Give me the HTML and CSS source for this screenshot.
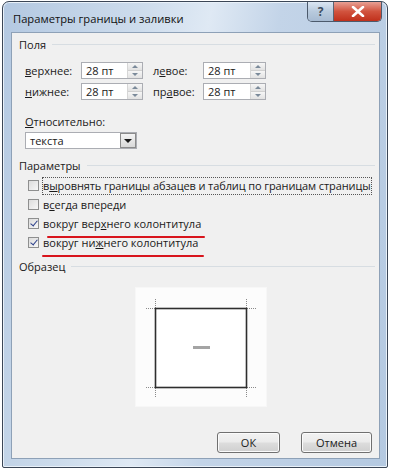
FILE: index.html
```html
<!DOCTYPE html>
<html lang="ru">
<head>
    <meta charset="UTF-8">
    <title>Параметры границы и заливки</title>
    <link rel="stylesheet" href="styles.css">
</head>
<body>
<div class="window">
    <div class="titlebar">
        <span class="title">Параметры границы и заливки</span>
        <div class="caption-buttons">
            <div class="cap help">?</div>
            <div class="cap close">
                <svg width="14" height="11" viewBox="0 0 14 11"><path d="M2 1 L12 10 M12 1 L2 10" stroke="#fff" stroke-width="2.6" stroke-linecap="round"/></svg>
            </div>
        </div>
    </div>

    <div class="client">
        <div class="group-head"><span>Поля</span><i></i></div>

        <div class="fields">
            <label class="lbl"><u>в</u>ерхнее:</label>
            <div class="spin"><span>28 пт</span><b class="arrows"><em class="up"></em><em class="down"></em></b></div>
            <label class="lbl"><span>л<u>е</u>вое:</span></label>
            <div class="spin"><span>28 пт</span><b class="arrows"><em class="up"></em><em class="down"></em></b></div>

            <label class="lbl"><u>н</u>ижнее:</label>
            <div class="spin"><span>28 пт</span><b class="arrows"><em class="up"></em><em class="down"></em></b></div>
            <label class="lbl">пр<u>а</u>вое:</label>
            <div class="spin"><span>28 пт</span><b class="arrows"><em class="up"></em><em class="down"></em></b></div>
        </div>

        <div class="relative-lbl"><u>О</u>тносительно:</div>
        <div class="combo"><span>текста</span><b class="drop"><em></em></b></div>

        <div class="group-head params"><span>Параметры</span><i></i></div>

        <div class="checks">
            <div class="check-row"><span class="box"></span><span class="text focus">в<u>ы</u>ровнять границы абзацев и таблиц по границам страницы</span></div>
            <div class="check-row"><span class="box"></span><span class="text">в<u>с</u>егда впереди</span></div>
            <div class="check-row"><span class="box on"></span><span class="text marked top">вокруг вер<u>х</u>него колонтитула</span></div>
            <div class="check-row"><span class="box on"></span><span class="text marked bottom">вокруг ни<u>ж</u>него колонтитула</span></div>
        </div>

        <div class="group-head sample-head"><span>Образец</span><i></i></div>

        <div class="preview">
            <svg width="130" height="118" viewBox="0 0 130 118">
                <g stroke="#8a8a8a" stroke-width="1" stroke-dasharray="1 1" fill="none">
                    <path d="M10 20.5 H19 M19.5 11 V20"/>
                    <path d="M111 20.5 H120 M110.5 11 V20"/>
                    <path d="M10 99.5 H19 M19.5 100 V109"/>
                    <path d="M111 99.5 H120 M110.5 100 V109"/>
                </g>
                <rect x="19.5" y="20.5" width="91" height="79" fill="#fff" stroke="#2e2e2e" stroke-width="1.6"/>
                <rect x="57" y="58" width="17" height="3" fill="#a4a4a4"/>
            </svg>
        </div>

        <div class="buttons">
            <div class="btn ok">ОК</div>
            <div class="btn cancel">Отмена</div>
        </div>
    </div>
</div>
</body>
</html>
```

FILE: styles.css
```css
body { margin: 0; background: #fff; font-family: "Open Sans", "Noto Sans", sans-serif; font-size: 11px; color: #1a1a1a; }

.window {
    margin: 1px 0 0 2px;
    width: 386px;
    height: 467px;
    border: 1px solid #3b4656;
    border-radius: 7px 7px 2px 2px;
    background: linear-gradient(100deg, #b3c8e1 0%, #cddcec 30%, #dfe9f4 45%, #c3d4e8 60%, #b4c9e1 100%);
    box-sizing: border-box;
    display: flex;
    flex-direction: column;
    box-shadow: inset 0 0 0 1px #e9f1f9;
}

.titlebar { height: 30px; display: flex; align-items: flex-start; position: relative; }
.title { font-size: 11.2px; margin: 9px 0 0 10px; color: #111; }

.caption-buttons { margin-left: auto; margin-right: 5px; display: flex; border: 1px solid #4c5a6c; border-top: none; border-radius: 0 0 5px 5px; overflow: hidden; height: 19px; }
.cap { display: flex; align-items: center; justify-content: center; }
.help { width: 25px; background: linear-gradient(#dbe6f2, #b8cadd 50%, #a7bbd2); color: #3e4d60; font-weight: bold; font-size: 12px; border-right: 1px solid #5b6473; }
.close { width: 47px; background: linear-gradient(#e8a094, #d1533e 50%, #c0301b); }

.client {
    flex: 1;
    margin: 0 7px 8px 8px;
    border: 1px solid #8ea1b7;
    background: #f0f0f0;
    display: flex;
    flex-direction: column;
    padding: 0 0 5px 0;
    position: relative;
}

u { text-decoration: underline; text-underline-offset: 1px; }

.group-head { display: flex; align-items: center; height: 16px; margin: 3px 4px 0 7px; }
.group-head i { flex: 1; border-top: 1px solid #d7dde2; margin-left: 6px; }
.group-head.params { margin-top: 8px; }
.group-head.sample-head { margin-top: 6px; }

.fields { display: grid; grid-template-columns: 56px 62px 60px 63px; row-gap: 4px; margin: 10px 0 0 13px; }
.fields .lbl { display: flex; align-items: center; height: 17px; }
.fields .lbl:nth-child(3), .fields .lbl:nth-child(7) { padding-left: 10px; }

.spin { height: 17px; border: 1px solid #abadb3; background: #fff; display: flex; box-sizing: border-box; }
.spin span { flex: 1; padding-left: 4px; line-height: 15px; }
.arrows { width: 14px; display: flex; flex-direction: column; border-left: 1px solid #d6d6d6; }
.arrows em { flex: 1; background: linear-gradient(#f6f6f6, #e2e2e2); position: relative; }
.arrows em + em { border-top: 1px solid #d0d0d0; }
.arrows em::after { content: ""; position: absolute; left: 4px; border-left: 3px solid transparent; border-right: 3px solid transparent; }
.arrows .up::after { top: 2px; border-bottom: 3px solid #7b8a9a; }
.arrows .down::after { top: 2px; border-top: 3px solid #7b8a9a; }

.relative-lbl { margin: 14px 0 0 13px; height: 16px; line-height: 16px; }

.combo { margin: 2px 0 0 13px; width: 112px; height: 17px; border: 1px solid #abadb3; background: #fff; display: flex; box-sizing: border-box; }
.combo span { flex: 1; padding-left: 4px; line-height: 15px; }
.drop { width: 14px; border: 1px solid #8b8b8b; background: linear-gradient(#f4f4f4, #d9d9d9); position: relative; }
.drop em { position: absolute; left: 3px; top: 5px; border-left: 4px solid transparent; border-right: 4px solid transparent; border-top: 4px solid #1a1a1a; }

.checks { margin: 3px 0 0 16px; }
.check-row { height: 19px; display: flex; align-items: center; white-space: nowrap; }
.box { flex: none; width: 11px; height: 11px; border: 1px solid #8e8f8f; box-sizing: border-box; background: linear-gradient(135deg, #dcdcdc, #f7f7f7); position: relative; margin-right: 3px; }
.box.on::after { content: ""; position: absolute; left: 3px; top: 0px; width: 3px; height: 6px; border-right: 1.6px solid #2b3f8a; border-bottom: 1.6px solid #2b3f8a; transform: rotate(40deg); }
.text { padding: 1px 1px 2px 1px; position: relative; }
.text.focus { outline: 1px dotted #555; outline-offset: -1px; letter-spacing: -0.1px; }

/* red hand-drawn marks */
.marked::after { content: ""; position: absolute; height: 2px; background: #d8141c; border-radius: 1px; }
.marked.top::after { left: 5px; right: -3px; bottom: -5px; }
.marked.bottom::after { left: 0; right: -5px; bottom: -5px; }

.preview { margin: 14px 0 0 124px; width: 130px; height: 118px; background: #fcfcfc; box-shadow: 0 0 0 1px #f7f7f7; }
.preview svg { display: block; }

.buttons { margin-top: auto; display: flex; justify-content: flex-end; gap: 21px; padding-right: 7px; }
.btn { height: 21px; border: 1px solid #707070; border-radius: 3px; background: linear-gradient(#f2f2f2 0%, #ebebeb 48%, #dddddd 52%, #cfcfcf 100%); box-shadow: inset 0 0 0 1px #fbfbfb; display: flex; align-items: center; justify-content: center; box-sizing: border-box; }
.btn.ok { width: 63px; }
.btn.cancel { width: 71px; }
```
